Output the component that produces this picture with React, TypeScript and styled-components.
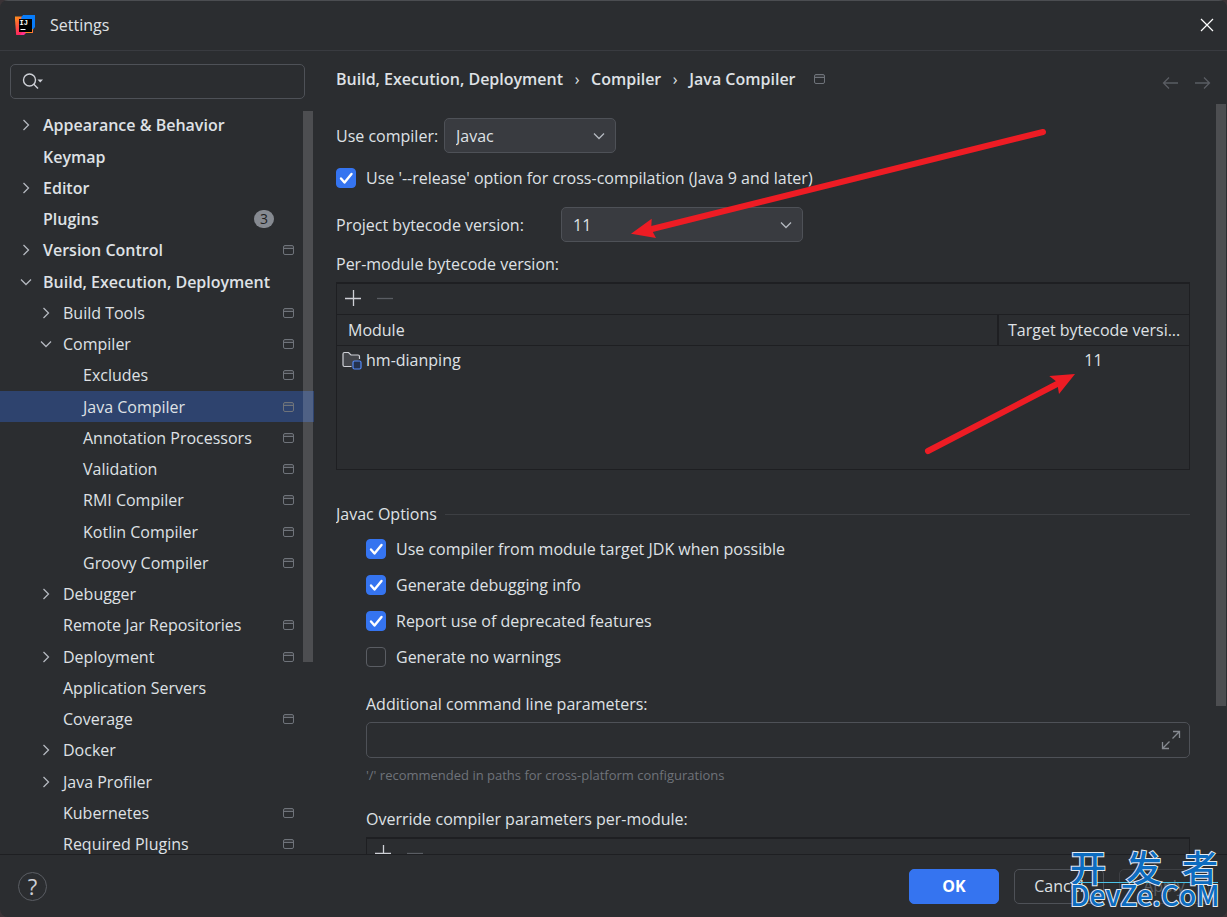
import React from "react";
import styled, { createGlobalStyle, css } from "styled-components";

const c = {
  bg: "#2b2d30",
  text: "#dfe1e5",
  muted: "#6f737a",
  border: "#4e5157",
  field: "#393b40",
  dark: "#1e1f22",
  blue: "#3574f0",
  selected: "#2e436e",
};

const Global = createGlobalStyle`
  * { box-sizing: border-box; }
  body {
    margin: 0;
    background: #3a3336;
    color: ${c.text};
    font: 16px/20px "Open Sans", "Noto Sans", "Noto Sans CJK SC", sans-serif;
  }
  button, input, select { font: inherit; color: inherit; }
  button { padding: 0; border: 0; background: none; }
  svg { display: block; flex: none; }
`;

const Dialog = styled.div`
  position: relative;
  display: grid;
  grid-template-rows: 51px minmax(0, 1fr) 63px;
  height: 100vh;
  overflow: hidden;
  background: ${c.bg};
  border-radius: 8px;
`;

const TitleBar = styled.header`
  display: flex;
  align-items: center;
  gap: 15px;
  padding: 0 13px 2px 15px;
  border-top: 1px solid #4b4d51;
  border-bottom: 1px solid #393b40;
`;

const Title = styled.h1`
  flex: 1;
  margin: 0;
  font-size: 16px;
  font-weight: 400;
`;

const Body = styled.div`
  display: grid;
  grid-template-columns: 314px minmax(0, 1fr);
  min-height: 0;
`;

const Sidebar = styled.aside`
  display: flex;
  flex-direction: column;
  gap: 10px;
  padding-top: 13px;
  min-height: 0;
`;

const SearchBox = styled.label`
  display: flex;
  flex: none;
  align-items: center;
  height: 35px;
  margin: 0 9px 0 10px;
  padding: 0 11px 2px;
  border: 1px solid ${c.border};
  border-radius: 5px;
`;

const PlainInput = styled.input`
  flex: 1;
  min-width: 0;
  padding: 0 8px;
  border: 0;
  outline: 0;
  background: none;
`;

const TreeArea = styled.nav`
  position: relative;
  flex: 1;
  min-height: 0;
  overflow: hidden;
`;

const Thumb = styled.span<{ $top: number; $share: number; $right: number }>`
  position: absolute;
  top: ${(p) => p.$top}px;
  right: ${(p) => p.$right}px;
  width: 10px;
  height: ${(p) => p.$share}%;
  background: rgba(255, 255, 255, 0.16);
`;

const Tree = styled.ul`
  margin: 0;
  padding: 0;
  list-style: none;
`;

const TreeItem = styled.li`
  height: 31px;
  &:nth-child(4n + 1) { height: 32px; }
`;

const TreeButton = styled.button<{ $level: number; $selected?: boolean }>`
  display: flex;
  align-items: center;
  width: 100%;
  height: 31px;
  padding: 0 19px 0 ${(p) => 16 + p.$level * 20}px;
  text-align: left;
  font-weight: ${(p) => (p.$level === 0 ? 600 : 400)};
  background: ${(p) => (p.$selected ? c.selected : "transparent")};
`;

const ChevronSlot = styled.span`
  display: flex;
  justify-content: center;
  width: 20px;
  margin-right: 7px;
`;

const TreeLabel = styled.span`
  flex: 1;
  white-space: nowrap;
`;

const Badge = styled.span`
  width: 20px;
  margin-right: 21px;
  border-radius: 9px;
  background: #868a91;
  color: ${c.dark};
  font-size: 14px;
  font-weight: 400;
  line-height: 18px;
  text-align: center;
`;

const Main = styled.main`
  position: relative;
  display: flex;
  flex-direction: column;
  min-height: 0;
  padding: 0 16px 0 22px;
`;

const PageHeader = styled.div`
  display: flex;
  flex: none;
  align-items: center;
  justify-content: space-between;
  height: 53px;
  padding-top: 3px;
`;

const Crumbs = styled.div`
  display: flex;
  align-items: center;
  font-weight: 600;
  white-space: nowrap;
`;

const CrumbArrow = styled.span`
  width: 28px;
  font-weight: 400;
  text-align: center;
`;

const CrumbIcon = styled.span`
  margin-left: 18px;
`;

const History = styled.div`
  display: flex;
  gap: 17px;
  padding-top: 8px;
  color: #5a5d63;
`;

const Form = styled.form`
  display: flex;
  flex: 1;
  flex-direction: column;
  min-height: 0;
  overflow: hidden;
  padding: 14px 21px 0 0;
  & > * { flex-shrink: 0; }
`;

const Row = styled.div<{ $top?: number }>`
  display: flex;
  align-items: center;
  margin-top: ${(p) => p.$top ?? 0}px;
`;

const Label = styled.label<{ $width?: number }>`
  width: ${(p) => (p.$width ? p.$width + "px" : "auto")};
  white-space: nowrap;
`;

const Combo = styled.span<{ $width: number }>`
  display: grid;
  grid-template-columns: minmax(0, 1fr) 33px;
  align-items: center;
  width: ${(p) => p.$width}px;
  height: 35px;
  border: 1px solid ${c.border};
  border-radius: 5px;
  background: ${c.field};
  svg { grid-area: 1 / 2; margin-left: 11px; pointer-events: none; }
`;

const ComboSelect = styled.select`
  grid-area: 1 / 1 / 2 / 3;
  height: 33px;
  padding: 0 11px;
  border: 0;
  outline: 0;
  appearance: none;
  background: none;
`;

const CheckLabel = styled.label`
  display: flex;
  align-items: center;
  gap: 10px;
  white-space: nowrap;
`;

const CheckCell = styled.span`
  display: grid;
  width: 20px;
  height: 20px;
  & > * { grid-area: 1 / 1; }
  svg { pointer-events: none; visibility: hidden; }
  input:checked + svg { visibility: visible; }
`;

const CheckInput = styled.input`
  appearance: none;
  width: 20px;
  height: 20px;
  margin: 0;
  border: 1px solid #5a5d63;
  border-radius: 4px;
  &:checked { border-color: ${c.blue}; background: ${c.blue}; }
`;

const FieldTitle = styled.div<{ $top: number }>`
  margin: ${(p) => p.$top}px 0 8px;
`;

const TableFrame = styled.div`
  height: 188px;
  border: 1px solid ${c.dark};
  border-top-width: 2px;
`;

const Toolbar = styled.div`
  display: flex;
  align-items: center;
  gap: 16px;
  height: 31px;
  padding: 0 8px 2px;
  border-bottom: 1px solid ${c.dark};
`;

const ToolButton = styled.button`
  color: #ced0d6;
  &:disabled { color: #5a5d63; }
`;

const Grid = styled.table`
  width: 100%;
  border-collapse: collapse;
  table-layout: fixed;
`;

const cell = css`
  padding: 0 9px 0 11px;
  text-align: left;
  font-weight: 400;
  white-space: nowrap;
`;

const HeadCell = styled.th<{ $width?: number }>`
  ${cell}
  height: 30px;
  width: ${(p) => (p.$width ? p.$width + "px" : "auto")};
  border-bottom: 1px solid ${c.dark};
  & + & { border-left: 2px solid ${c.dark}; padding: 0 0 0 9px; }
`;

const ModuleCell = styled.td`
  height: 30px;
  padding: 0 0 0 5px;
`;

const ModuleName = styled.span`
  display: flex;
  align-items: center;
  gap: 4px;
`;

const VersionCell = styled.td`
  padding: 0;
  text-align: center;
`;

const SectionTitle = styled.h2`
  display: flex;
  align-items: center;
  gap: 8px;
  margin: 34px 0 15px;
  font-size: 16px;
  font-weight: 400;
  &::after { content: ""; flex: 1; height: 1px; background: #3d3f43; }
`;

const Options = styled.div`
  display: flex;
  flex-direction: column;
  padding-left: 30px;
`;

const CheckList = styled.div`
  display: flex;
  flex-direction: column;
  align-items: flex-start;
  gap: 16px;
`;

const ExpandField = styled.div`
  display: flex;
  align-items: center;
  height: 36px;
  padding-right: 8px;
  border: 1px solid ${c.border};
  border-radius: 5px;
`;

const Hint = styled.p`
  margin: 7px 0 0;
  color: ${c.muted};
  font-size: 13px;
`;

const Footer = styled.footer`
  display: flex;
  align-items: center;
  gap: 15px;
  padding: 0 18px;
  border-top: 1px solid ${c.dark};
`;

const HelpButton = styled.button`
  width: 29px;
  height: 29px;
  margin-right: auto;
  border: 1px solid #5a5d63;
  border-radius: 50%;
  font-size: 22px;
  line-height: 26px;
  color: #ced0d6;
`;

const DialogButton = styled.button<{ $primary?: boolean }>`
  width: 90px;
  height: 35px;
  border: 1px solid ${(p) => (p.$primary ? c.blue : c.border)};
  border-radius: 5px;
  background: ${(p) => (p.$primary ? c.blue : "transparent")};
  color: ${(p) => (p.$primary ? "#fff" : c.text)};
  font-weight: ${(p) => (p.$primary ? 700 : 400)};
  &:disabled { color: #5a5d63; border-color: #3d3f43; }
`;

const Annotations = styled.svg`
  position: absolute;
  top: 0;
  left: 0;
  pointer-events: none;
`;

const Watermark = styled.div`
  position: absolute;
  right: 9px;
  bottom: 11px;
  width: 148px;
  color: #0c6cc0;
  font-family: "Noto Sans CJK SC", sans-serif;
  font-weight: 500;
  -webkit-text-stroke: 2px #e4eaf0;
  paint-order: stroke fill;
  pointer-events: none;
`;

const WatermarkTop = styled.div`
  display: flex;
  justify-content: space-between;
  border-bottom: 1px solid #4cc3e8;
  font-size: 36px;
  line-height: 32px;
`;

const WatermarkBottom = styled.div`
  font-size: 28px;
  line-height: 23px;
  text-align: center;
`;

const Chevron = ({ open }: { open?: boolean }) => (
  <svg width="12" height="12" viewBox="0 0 12 12" fill="none" stroke="#b4b8bf" strokeWidth="1.3">
    <path d={open ? "M1 3.5 6 8.5 11 3.5" : "M3.5 1 8.5 6 3.5 11"} />
  </svg>
);

const WindowIcon = () => (
  <svg width="12" height="12" viewBox="0 0 12 12" fill="none" stroke="#6f737a">
    <rect x="0.5" y="1.5" width="10" height="9" rx="1.5" />
    <path d="M1 4.5h9" />
    <path d="M1 3h9" opacity=".45" />
  </svg>
);

const Logo = () => (
  <svg width="20" height="20" viewBox="0 0 20 20">
    <defs>
      <linearGradient id="warm" x1="0" y1="0" x2="0.3" y2="1">
        <stop offset="0" stopColor="#ff9419" />
        <stop offset="0.5" stopColor="#ff5a3c" />
        <stop offset="1" stopColor="#ff2761" />
      </linearGradient>
    </defs>
    <path d="M0 1.5h8v16L6 20H1.2L0 5z" fill="url(#warm)" />
    <path d="M5 20h4l2-2h7v-5l-8 1z" fill="#ff318c" />
    <path d="M10 18h7.5l.8-5H12z" fill="#ff8a1e" />
    <path d="M8 0h12v12l-2 2.500L8 6 6 3z" fill="#087cfa" />
    <rect x="4" y="4" width="13" height="13" fill="#000" />
    <text x="4.600" y="10" fill="#fff" fontSize="7" fontWeight="700" fontFamily="Liberation Mono, monospace">IJ</text>
    <path d="M5.500 14.500h5" stroke="#fff" />
  </svg>
);

const Plus = () => (
  <svg width="16" height="16" viewBox="0 0 16 16" stroke="currentColor" strokeWidth="1.300">
    <path d="M0 8.500h16M8.500 0v16" />
  </svg>
);

const Minus = () => (
  <svg width="16" height="16" viewBox="0 0 16 16" stroke="currentColor" strokeWidth="1.300">
    <path d="M0 8.500h16" />
  </svg>
);

const ModuleIcon = () => (
  <svg width="20" height="20" viewBox="0 0 20 20" fill="none">
    <path
      d="M9.500 16.500H2.500a1.500 1.500 0 0 1-1.500-1.500V4a1.500 1.500 0 0 1 1.500-1.500h4L9 5h7a1.500 1.500 0 0 1 1.500 1.500V9"
      fill="#43454a"
      stroke="#ced0d6"
      strokeWidth="1.200"
    />
    <rect x="11" y="11" width="8" height="8" rx="1.500" fill="#25324d" stroke="#548af7" strokeWidth="1.200" />
  </svg>
);

const HistoryArrow = ({ forward }: { forward?: boolean }) => (
  <svg width="16" height="12" viewBox="0 0 16 12" fill="none" stroke="currentColor" strokeWidth="1.300">
    <path d={forward ? "M0 6h14.500M9 .5 14.500 6 9 11.500" : "M16 6H1.500M7 .5 1.500 6 7 11.500"} />
  </svg>
);

type Node = { name: string; level: number; open?: boolean; icon?: boolean; badge?: number };

const nodes: Node[] = [
  { name: "Appearance & Behavior", level: 0, open: false },
  { name: "Keymap", level: 0 },
  { name: "Editor", level: 0, open: false },
  { name: "Plugins", level: 0, badge: 3 },
  { name: "Version Control", level: 0, open: false, icon: true },
  { name: "Build, Execution, Deployment", level: 0, open: true },
  { name: "Build Tools", level: 1, open: false, icon: true },
  { name: "Compiler", level: 1, open: true, icon: true },
  { name: "Excludes", level: 2, icon: true },
  { name: "Java Compiler", level: 2, icon: true },
  { name: "Annotation Processors", level: 2, icon: true },
  { name: "Validation", level: 2, icon: true },
  { name: "RMI Compiler", level: 2, icon: true },
  { name: "Kotlin Compiler", level: 2, icon: true },
  { name: "Groovy Compiler", level: 2, icon: true },
  { name: "Debugger", level: 1, open: false },
  { name: "Remote Jar Repositories", level: 1, icon: true },
  { name: "Deployment", level: 1, open: false, icon: true },
  { name: "Application Servers", level: 1 },
  { name: "Coverage", level: 1, icon: true },
  { name: "Docker", level: 1, open: false },
  { name: "Java Profiler", level: 1, open: false },
  { name: "Kubernetes", level: 1, icon: true },
  { name: "Required Plugins", level: 1, icon: true },
];

const Check = ({ label, on }: { label: string; on?: boolean }) => (
  <CheckLabel>
    <CheckCell>
      <CheckInput type="checkbox" defaultChecked={on} />
      <svg width="20" height="20" viewBox="0 0 20 20" fill="none" stroke="#fff" strokeWidth="2.400" strokeLinecap="round" strokeLinejoin="round">
        <path d="M5 10.500 8.500 14.500 15.500 6" />
      </svg>
    </CheckCell>
    {label}
  </CheckLabel>
);

const Tools = () => (
  <Toolbar>
    <ToolButton type="button" aria-label="Add"><Plus /></ToolButton>
    <ToolButton type="button" aria-label="Remove" disabled><Minus /></ToolButton>
  </Toolbar>
);

export default function App() {
  const [current, setCurrent] = React.useState("Java Compiler");
  return (
    <>
      <Global />
      <Dialog>
        <TitleBar>
          <Logo />
          <Title>Settings</Title>
          <button aria-label="Close">
            <svg width="14" height="14" viewBox="0 0 14 14" stroke="#fff" strokeWidth="1.200">
              <path d="M1 1 13 13M13 1 1 13" />
            </svg>
          </button>
        </TitleBar>

        <Body>
          <Sidebar>
            <SearchBox>
              <svg width="22" height="18" viewBox="0 0 22 18" fill="none" stroke="#ced0d6" strokeWidth="1.400">
                <circle cx="7.500" cy="8" r="6" />
                <path d="M11.800 12.300 16 16.500" />
                <path d="M15.500 7.500h5.500L18.200 10.500z" fill="#ced0d6" stroke="none" />
              </svg>
              <PlainInput type="text" aria-label="Search settings" />
            </SearchBox>
            <TreeArea aria-label="Settings categories">
              <Tree>
                {nodes.map((n) => (
                  <TreeItem key={n.name}>
                    <TreeButton
                      $level={n.level}
                      $selected={n.name === current}
                      onClick={() => setCurrent(n.name)}
                    >
                      <ChevronSlot>{n.open !== undefined && <Chevron open={n.open} />}</ChevronSlot>
                      <TreeLabel>{n.name}</TreeLabel>
                      {n.badge && <Badge>{n.badge}</Badge>}
                      {n.icon && <WindowIcon />}
                    </TreeButton>
                  </TreeItem>
                ))}
              </Tree>
              <Thumb $top={2} $right={1} $share={74} />
            </TreeArea>
          </Sidebar>

          <Main>
            <PageHeader>
              <Crumbs>
                <span>Build, Execution, Deployment</span>
                <CrumbArrow>›</CrumbArrow>
                <span>Compiler</span>
                <CrumbArrow>›</CrumbArrow>
                <span>Java Compiler</span>
                <CrumbIcon><WindowIcon /></CrumbIcon>
              </Crumbs>
              <History>
                <button aria-label="Back" disabled><HistoryArrow /></button>
                <button aria-label="Forward" disabled><HistoryArrow forward /></button>
              </History>
            </PageHeader>

            <Form>
              <Row>
                <Label htmlFor="compiler" $width={108}>Use compiler:</Label>
                <Combo $width={172}>
                  <ComboSelect id="compiler"><option>Javac</option></ComboSelect>
                  <Chevron open />
                </Combo>
              </Row>
              <Row $top={15}>
                <Check on label="Use '--release' option for cross-compilation (Java 9 and later)" />
              </Row>
              <Row $top={19}>
                <Label htmlFor="bytecode" $width={225}>Project bytecode version:</Label>
                <Combo $width={242}>
                  <ComboSelect id="bytecode"><option>11</option></ComboSelect>
                  <Chevron open />
                </Combo>
              </Row>
              <FieldTitle $top={12}>Per-module bytecode version:</FieldTitle>
              <TableFrame>
                <Tools />
                <Grid>
                  <thead>
                    <tr>
                      <HeadCell>Module</HeadCell>
                      <HeadCell $width={191}>Target bytecode versi...</HeadCell>
                    </tr>
                  </thead>
                  <tbody>
                    <tr>
                      <ModuleCell><ModuleName><ModuleIcon />hm-dianping</ModuleName></ModuleCell>
                      <VersionCell>11</VersionCell>
                    </tr>
                  </tbody>
                </Grid>
              </TableFrame>

              <SectionTitle>Javac Options</SectionTitle>
              <Options>
                <CheckList>
                  <Check on label="Use compiler from module target JDK when possible" />
                  <Check on label="Generate debugging info" />
                  <Check on label="Report use of deprecated features" />
                  <Check label="Generate no warnings" />
                </CheckList>
                <FieldTitle $top={27}><label htmlFor="params">Additional command line parameters:</label></FieldTitle>
                <ExpandField>
                  <PlainInput id="params" type="text" />
                  <button type="button" aria-label="Expand">
                    <svg width="20" height="20" viewBox="0 0 20 20" fill="none" stroke="#868a91" strokeWidth="1.300">
                      <path d="M11.500 8.500 18 2M12 1.500h6.500V8M8.500 11.500 2 18M1.500 12v6.500H8" />
                    </svg>
                  </button>
                </ExpandField>
                <Hint>'/' recommended in paths for cross-platform configurations</Hint>
                <FieldTitle $top={24}>Override compiler parameters per-module:</FieldTitle>
                <TableFrame><Tools /></TableFrame>
              </Options>
            </Form>
            <Thumb $top={53} $right={1} $share={75} />
          </Main>
        </Body>

        <Footer>
          <HelpButton aria-label="Help">?</HelpButton>
          <DialogButton $primary>OK</DialogButton>
          <DialogButton>Cancel</DialogButton>
          <DialogButton disabled>Apply</DialogButton>
        </Footer>

        <Annotations width="1227" height="500" viewBox="0 0 1227 500" fill="#ed1c24" stroke="#ed1c24">
          <path d="M1043 132 652 229M928 451 1057 384" strokeWidth="6" strokeLinecap="round" fill="none" />
          <path d="M631 233.700 651.700 218.700 651.300 227 652.700 231.700 656 238zM1075 374 1049.300 376 1055.700 381 1057.700 386 1059 394z" stroke="none" />
        </Annotations>
        <Watermark>
          <WatermarkTop><span>开</span><span>发</span><span>者</span></WatermarkTop>
          <WatermarkBottom>DevZe.CoM</WatermarkBottom>
        </Watermark>
      </Dialog>
    </>
  );
}
